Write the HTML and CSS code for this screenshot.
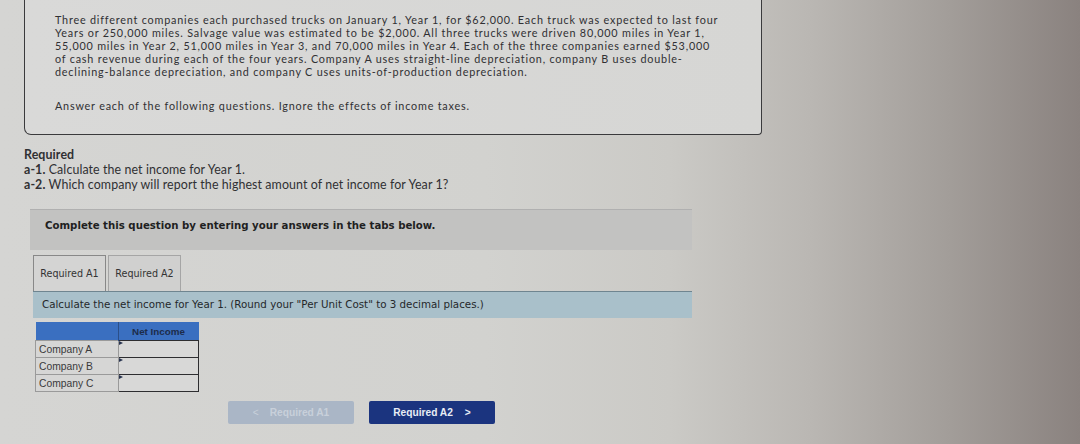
FILE: index.html
```html
<!DOCTYPE html>
<html>
<head>
<meta charset="utf-8">
<link rel="stylesheet" href="styles.css">
</head>
<body>
<div class="page">
  <div class="problem">
    <p class="para">Three different companies each purchased trucks on January 1, Year 1, for $62,000. Each truck was expected to last four<br>Years or 250,000 miles. Salvage value was estimated to be $2,000. All three trucks were driven 80,000 miles in Year 1,<br>55,000 miles in Year 2, 51,000 miles in Year 3, and 70,000 miles in Year 4. Each of the three companies earned $53,000<br>of cash revenue during each of the four years. Company A uses straight-line depreciation, company B uses double-<br>declining-balance depreciation, and company C uses units-of-production depreciation.</p>
    <p class="para answer">Answer each of the following questions. Ignore the effects of income taxes.</p>
  </div>

  <div class="required">
    <div class="req-title">Required</div>
    <div class="req-line"><b>a-1.</b> Calculate the net income for Year 1.</div>
    <div class="req-line"><b>a-2.</b> Which company will report the highest amount of net income for Year 1?</div>
  </div>

  <div class="work">
    <div class="banner">Complete this question by entering your answers in the tabs below.</div>
    <div class="tabs">
      <div class="tab active">Required A1</div>
      <div class="tab">Required A2</div>
    </div>
    <div class="instruct">Calculate the net income for Year 1. (Round your "Per Unit Cost" to 3 decimal places.)</div>
    <table class="grid">
      <tr class="head"><th></th><th>Net Income</th></tr>
      <tr><td class="lbl">Company A</td><td class="inp"><span class="flag"></span></td></tr>
      <tr><td class="lbl">Company B</td><td class="inp"><span class="flag"></span></td></tr>
      <tr><td class="lbl">Company C</td><td class="inp"><span class="flag"></span></td></tr>
    </table>
    <div class="nav">
      <div class="btn prev"><span class="chev">&lt;</span>Required A1</div>
      <div class="btn next">Required A2<span class="chev">&gt;</span></div>
    </div>
  </div>
</div>
</body>
</html>
```

FILE: styles.css
```css
html, body {
  margin: 0;
  padding: 0;
}
body {
  width: 1080px;
  height: 444px;
  overflow: hidden;
  background: linear-gradient(90deg, #d5d5d3 0%, #d2d2cf 45%, #cbcac6 62%, #bab7b3 75%, #a29d99 88%, #8a827f 100%);
  font-family: "Lato", "Open Sans", sans-serif;
  color: #303033;
}
.page {
  padding-left: 24px;
}
.problem {
  width: 706px;
  height: 121px;
  padding: 13px 0 0 30px;
  border: 1.5px solid #3a3a3c;
  border-top: none;
  border-bottom-left-radius: 7px;
  border-bottom-right-radius: 4px;
  background: linear-gradient(90deg, #d9d9d8, #d6d6d4);
}
.para {
  margin: 0;
  font-size: 10.8px;
  line-height: 13px;
  letter-spacing: 0.8px;
  white-space: nowrap;
}
.answer {
  margin-top: 21px;
}
.required {
  margin-top: 12px;
  font-size: 12.4px;
  line-height: 15px;
  letter-spacing: 0.1px;
}
.req-title {
  font-weight: bold;
}
.req-line b {
  font-weight: bold;
}
.work {
  margin-left: 6px;
  width: 662px;
  margin-top: 17px;
}
.banner {
  height: 41px;
  box-sizing: border-box;
  padding: 10px 0 0 15px;
  background: #c2c2c1;
  border-top: 1px solid #b0b0b0;
  font-family: "DejaVu Sans", Verdana, sans-serif;
  font-weight: bold;
  font-size: 10.2px;
  color: #1f1f22;
}
.tabs {
  display: flex;
  gap: 2px;
  margin-top: 5px;
  padding-left: 3px;
}
.tab {
  width: 73px;
  height: 36px;
  box-sizing: border-box;
  border: 1px solid #a5a5a5;
  border-bottom: none;
  background: #d0d0cf;
  font-family: "DejaVu Sans", Verdana, sans-serif;
  font-size: 9.6px;
  color: #333;
  display: flex;
  align-items: center;
  justify-content: center;
}
.tab.active {
  background: #d4d4d3;
  border-color: #888;
}
.instruct {
  margin-left: 3px;
  height: 27px;
  box-sizing: border-box;
  background: #a9c0ca;
  border-top: 1.5px solid #6f8590;
  padding: 6px 0 0 9px;
  font-family: "DejaVu Sans", Verdana, sans-serif;
  font-size: 10.3px;
  color: #25282b;
}
.grid {
  margin: 4px 0 0 5px;
  border-collapse: collapse;
  font-family: "Liberation Sans", Arial, sans-serif;
  font-size: 10.3px;
}
.grid th {
  background: #3a6fc0;
  color: #1d2c4a;
  font-weight: bold;
  height: 18px;
  padding: 0;
  font-size: 9.8px;
}
.grid th:first-child {
  width: 82px;
}
.grid th:last-child {
  width: 80px;
  border-left: 1px solid #2b4f88;
}
.grid td {
  height: 16px;
  padding: 0;
}
.grid td.lbl {
  border: 1px solid #9a9a9a;
  padding-left: 3px;
  color: #3a3a3c;
  background: #d6d6d5;
}
.grid td.inp {
  border: 1.5px solid #2d2d30;
  background: #d8d8d7;
  position: relative;
  vertical-align: top;
}
.flag {
  position: absolute;
  left: 0;
  top: 0;
  width: 0;
  height: 0;
  border-top: 2.5px solid transparent;
  border-bottom: 2.5px solid transparent;
  border-left: 4px solid #2a3550;
}
.nav {
  display: flex;
  gap: 15px;
  margin: 9px 0 0 198px;
}
.btn {
  width: 126px;
  height: 23px;
  border-radius: 2px;
  display: flex;
  align-items: center;
  justify-content: center;
  font-family: "Liberation Sans", Arial, sans-serif;
  font-weight: bold;
  font-size: 10.2px;
}
.btn.prev {
  background: #aab6c6;
  color: #c8d0da;
}
.btn.prev .chev {
  margin-right: 11px;
  font-weight: normal;
}
.btn.next {
  background: #1b347f;
  color: #e8ecf5;
}
.btn.next .chev {
  margin-left: 12px;
}
```
